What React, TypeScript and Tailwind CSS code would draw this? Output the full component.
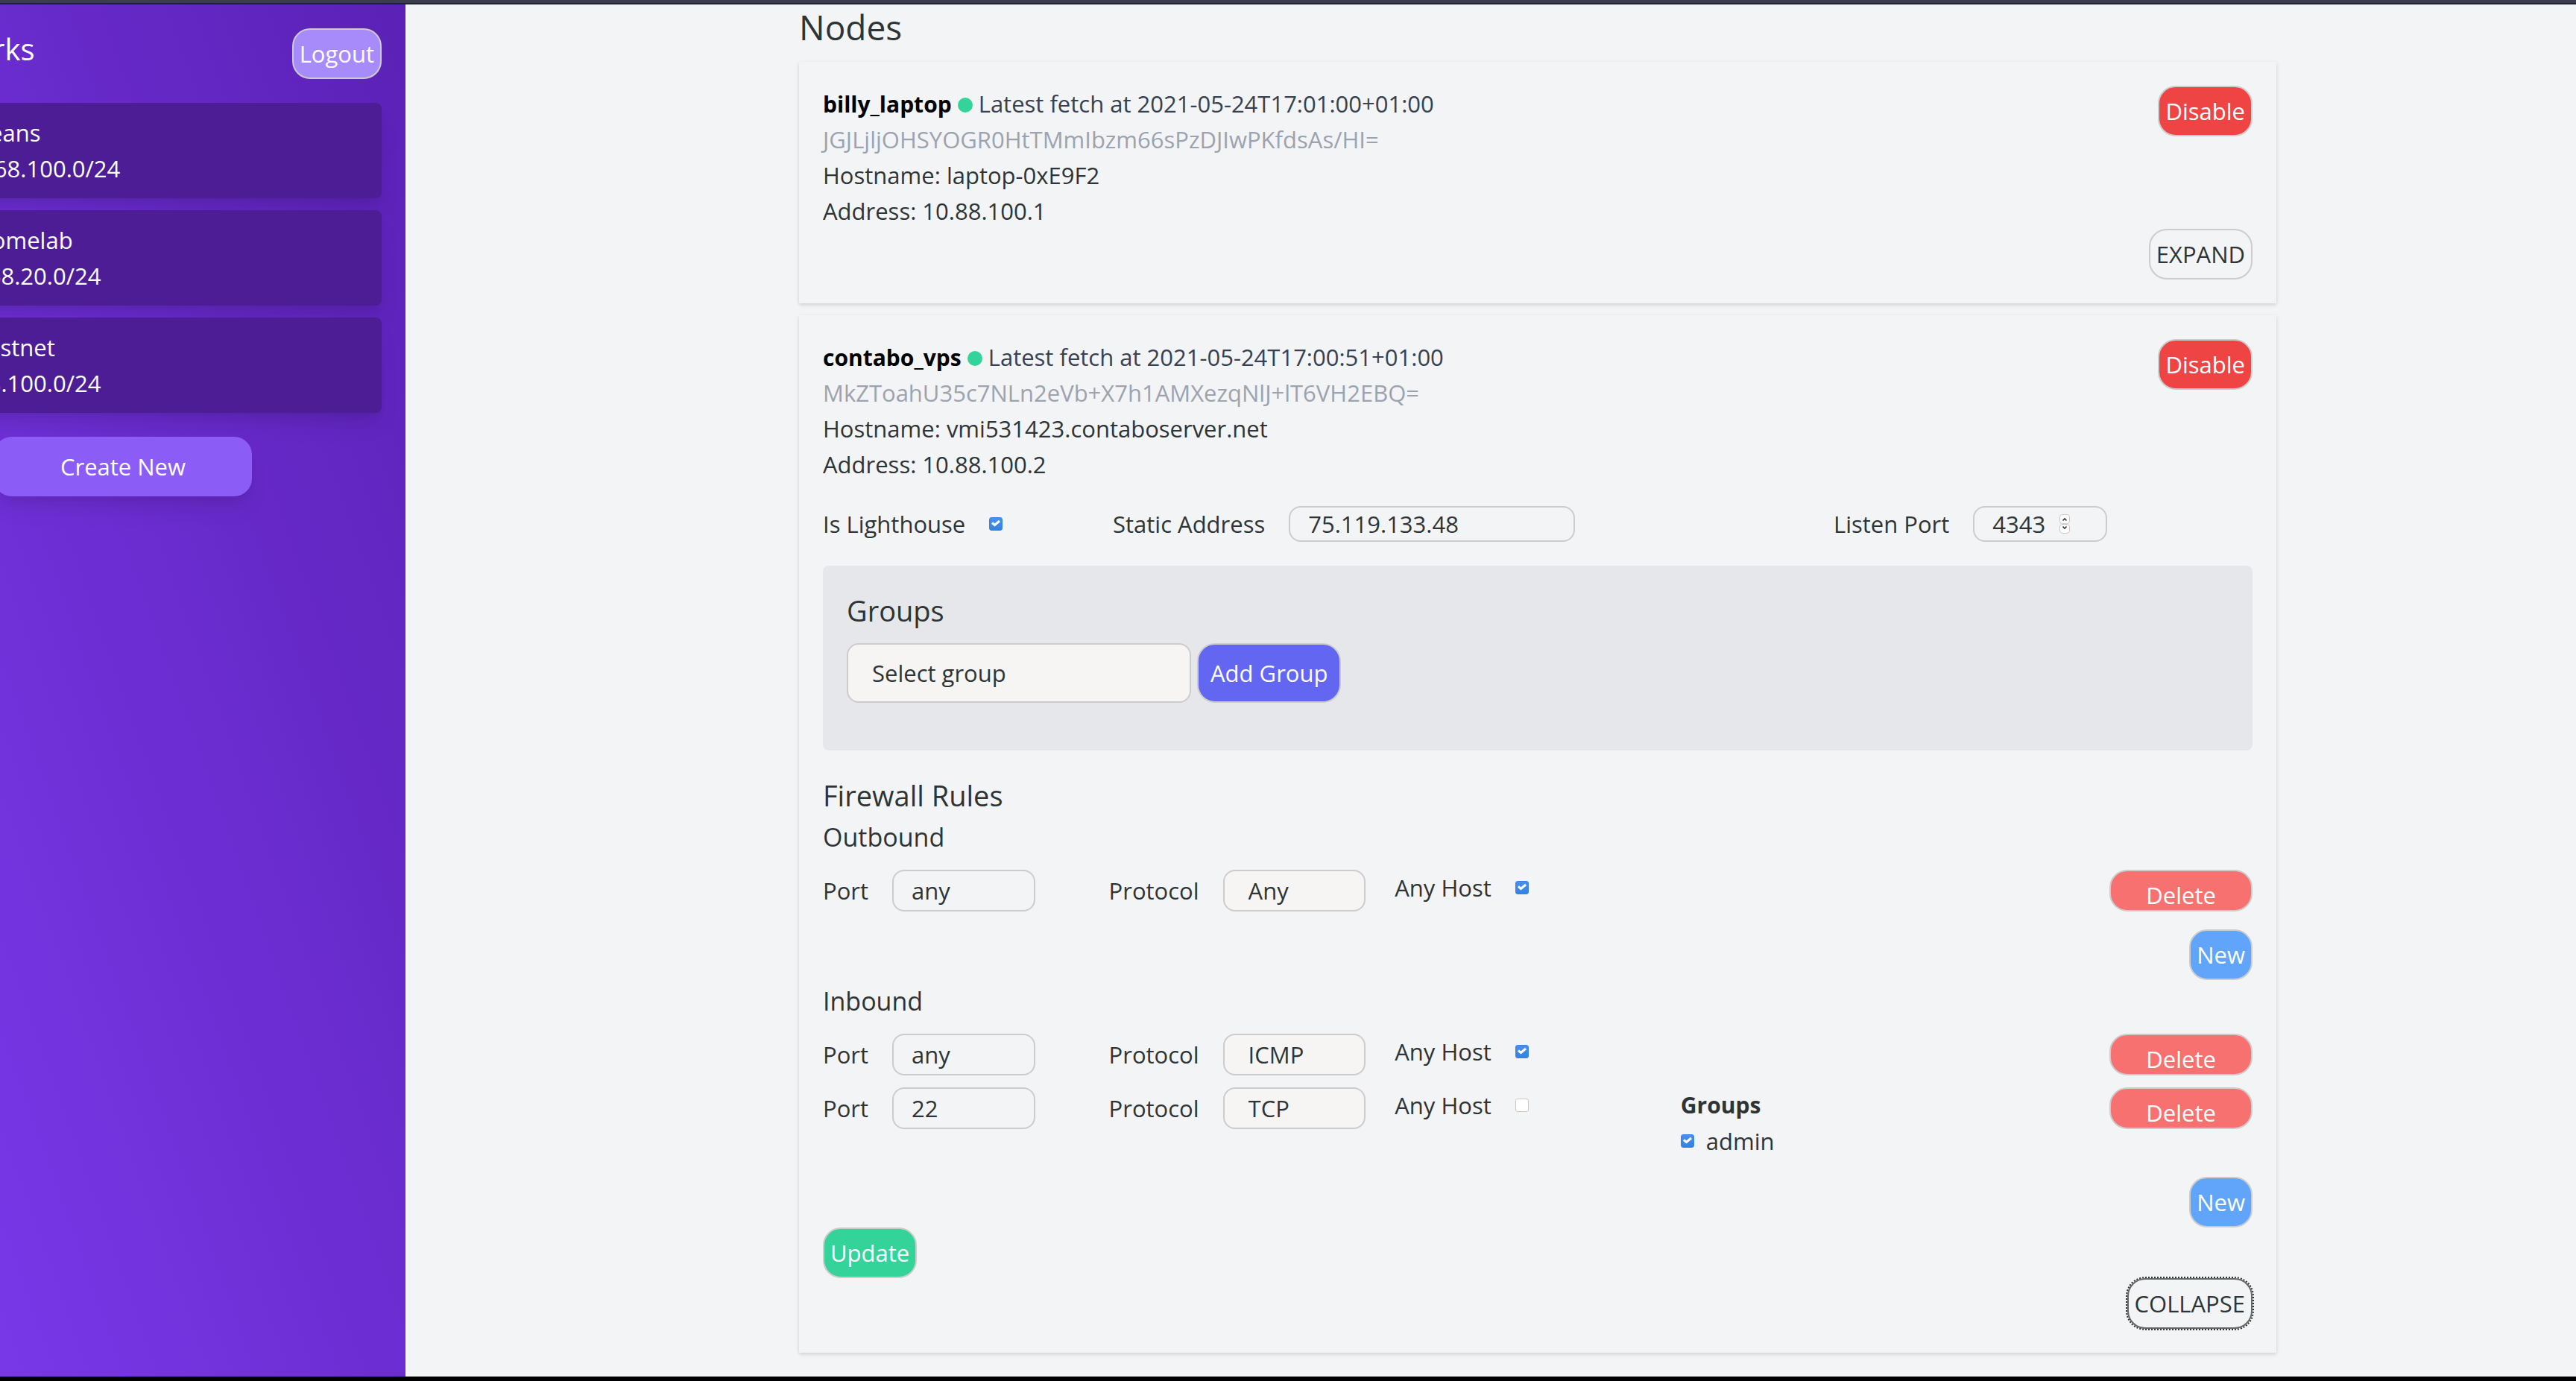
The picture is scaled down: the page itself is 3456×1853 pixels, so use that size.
import { useState } from "react";
import type { ReactNode } from "react";

const LINE = "text-[31px] leading-[48px]";

const networks = [
  { name: "Beans", cidr: "2.68.100.0/24" },
  { name: "Homelab", cidr: "168.20.0/24" },
  { name: "Testnet", cidr: "88.100.0/24" },
];

type Rule = { id: string; port: string; protocol: string; anyHost: boolean; groups?: string[] };

const outbound: Rule[] = [{ id: "out-1", port: "any", protocol: "Any", anyHost: true }];
const inbound: Rule[] = [
  { id: "in-1", port: "any", protocol: "ICMP", anyHost: true },
  { id: "in-2", port: "22", protocol: "TCP", anyHost: false, groups: ["admin"] },
];

function PillButton({ className, children }: { className: string; children: string }) {
  return (
    <button type="button" className={`rounded-3xl border-2 border-[#cccccc] p-2 text-[31px] leading-[48px] ${className}`}>
      {children}
    </button>
  );
}

function Checkbox({ id, initial }: { id: string; initial: boolean }) {
  const [on, setOn] = useState(initial);
  return (
    <span className="relative block size-[18px] shrink-0">
      <input
        id={id}
        type="checkbox"
        checked={on}
        onChange={() => setOn(!on)}
        className="block size-[18px] appearance-none rounded-[3px] border border-[#cdc7c2] bg-white checked:border-[#3584e4] checked:bg-linear-to-b checked:from-[#4a90ea] checked:to-[#3382e2]"
      />
      {on && (
        <svg viewBox="0 0 18 18" className="pointer-events-none absolute inset-0 size-[18px]" fill="none" stroke="white" strokeWidth="3" aria-hidden="true">
          <path d="M4 7.5 L7.5 10.5 L14 5" />
        </svg>
      )}
    </span>
  );
}

function Sidebar() {
  return (
    <aside className="w-[544px] shrink-0 overflow-hidden">
      <div className="-ml-[112px] h-full bg-linear-to-tr/srgb from-[#7c3aed] to-[#5b21b6] pt-8 pr-8 pl-[62px] text-white">
        <div className="flex items-start justify-between pl-4">
          <h2 className="text-[40px] leading-[56px]">orks</h2>
          <PillButton className="bg-[#a78bfa]">Logout</PillButton>
        </div>
        <ul className="mt-8 flex flex-col gap-4">
          {networks.map((n) => (
            <li key={n.name} className={`rounded-lg bg-[#4c1d95] p-4 shadow-[0_20px_30px_-6px_rgba(0,0,0,0.1),0_8px_12px_-4px_rgba(0,0,0,0.05)] ${LINE}`}>
              <p>{n.name}</p>
              <p>{n.cidr}</p>
            </li>
          ))}
        </ul>
        <button type="button" className={`mt-8 ml-[42px] w-[346px] rounded-3xl bg-[#8b5cf6] p-4 shadow-[0_20px_30px_-6px_rgba(0,0,0,0.1),0_8px_12px_-4px_rgba(0,0,0,0.05)] ${LINE}`}>
          Create New
        </button>
      </div>
    </aside>
  );
}

function NodeSummary({ name, fetched, publicKey, hostname, address }: Record<"name" | "fetched" | "publicKey" | "hostname" | "address", string>) {
  return (
    <div className="flex items-start justify-between">
      <div className={LINE}>
        <div className="flex h-12 items-baseline gap-2">
          <h2 className="text-[30px] font-bold text-black">{name}</h2>
          <span className="size-5 rounded-full bg-[#34d399]" />
          <span className="text-[#374151]">Latest fetch at {fetched}</span>
        </div>
        <p className="text-[#9ca3af]">{publicKey}</p>
        <p>Hostname: {hostname}</p>
        <p>Address: {address}</p>
      </div>
      <PillButton className="bg-[#ef4444] text-white">Disable</PillButton>
    </div>
  );
}

function RuleRow({ rule }: { rule: Rule }) {
  return (
    <div className={`mt-4 grid grid-cols-5 items-start ${LINE}`}>
      <div className="flex items-center gap-8">
        <label htmlFor={`${rule.id}-port`}>Port</label>
        <input id={`${rule.id}-port`} defaultValue={rule.port} className="h-14 w-1/2 rounded-2xl border-2 border-[#cccccc] px-6" />
      </div>
      <div className="flex items-center gap-8">
        <label htmlFor={`${rule.id}-protocol`}>Protocol</label>
        <select id={`${rule.id}-protocol`} defaultValue={rule.protocol} className="h-14 w-1/2 appearance-none rounded-2xl border-2 border-[#cccccc] bg-[#f6f5f4] px-8">
          <option>Any</option>
          <option>ICMP</option>
          <option>TCP</option>
          <option>UDP</option>
        </select>
      </div>
      <div className="flex items-center gap-8">
        <label htmlFor={`${rule.id}-any`}>Any Host</label>
        <Checkbox id={`${rule.id}-any`} initial={rule.anyHost} />
      </div>
      <div>
        {rule.groups && (
          <>
            <h4 className="text-[30px] font-bold">Groups</h4>
            {rule.groups.map((g) => (
              <div key={g} className="flex items-center gap-4">
                <Checkbox id={`${rule.id}-${g}`} initial />
                <label htmlFor={`${rule.id}-${g}`}>{g}</label>
              </div>
            ))}
          </>
        )}
      </div>
      <button type="button" className="flex h-14 w-1/2 justify-center justify-self-end rounded-3xl border-2 border-[#cccccc] bg-[#f87171] pt-2 text-white">
        Delete
      </button>
    </div>
  );
}

function RuleSection({ title, rules }: { title: string; rules: Rule[] }) {
  return (
    <section className="flex flex-col">
      <h3 className="text-[34px] leading-[56px]">{title}</h3>
      {rules.map((r) => (
        <RuleRow key={r.id} rule={r} />
      ))}
      <PillButton className="mt-6 self-end bg-[#60a5fa] text-white">New</PillButton>
    </section>
  );
}

function Card({ children }: { children: ReactNode }) {
  return (
    <article className="flex flex-col p-8 shadow-[0_2px_6px_rgba(0,0,0,0.1),0_2px_4px_rgba(0,0,0,0.06)]">{children}</article>
  );
}

export default function App() {
  return (
    <div className="flex min-h-screen flex-col bg-[#f3f4f6] font-['Open_Sans',sans-serif] text-[#2e3436]">
      <div className="h-[6px] border-b-2 border-[#22222e] bg-[#3b3c4c]" />
      <div className="flex grow">
        <Sidebar />
        <main className="grow pr-[402px] pb-8 pl-[528px]">
          <h1 className="text-[46px] leading-[61px]">Nodes</h1>
          <div className="mt-4 flex flex-col gap-4">
            <Card>
              <NodeSummary
                name="billy_laptop"
                fetched="2021-05-24T17:01:00+01:00"
                publicKey="JGJLjljOHSYOGR0HtTMmIbzm66sPzDJIwPKfdsAs/HI="
                hostname="laptop-0xE9F2"
                address="10.88.100.1"
              />
              <PillButton className="self-end">EXPAND</PillButton>
            </Card>
            <Card>
              <NodeSummary
                name="contabo_vps"
                fetched="2021-05-24T17:00:51+01:00"
                publicKey="MkZToahU35c7NLn2eVb+X7h1AMXezqNlJ+lT6VH2EBQ="
                hostname="vmi531423.contaboserver.net"
                address="10.88.100.2"
              />
              <div className={`mt-8 grid grid-cols-[389fr_967fr_562fr] ${LINE}`}>
                <div className="flex items-center gap-8">
                  <label htmlFor="lighthouse">Is Lighthouse</label>
                  <Checkbox id="lighthouse" initial />
                </div>
                <div className="flex items-center gap-8">
                  <label htmlFor="static-address">Static Address</label>
                  <input id="static-address" defaultValue="75.119.133.48" className="h-12 w-[384px] rounded-2xl border-2 border-[#cccccc] px-6" />
                </div>
                <div className="flex items-center gap-8">
                  <label htmlFor="listen-port">Listen Port</label>
                  <div className="relative">
                    <input
                      id="listen-port"
                      type="number"
                      defaultValue={4343}
                      className="block h-12 w-[180px] rounded-2xl border-2 border-[#cccccc] px-6 [appearance:textfield] [&::-webkit-inner-spin-button]:appearance-none"
                    />
                    <svg viewBox="0 0 14 26" className="pointer-events-none absolute top-[11px] left-[116px] h-[26px] w-[14px]" fill="white" stroke="#cdc7c2" aria-hidden="true">
                      <rect x="0.5" y="0.5" width="13" height="12" rx="3.5" />
                      <rect x="0.5" y="13.5" width="13" height="12" rx="3.5" />
                      <path d="M4.5 8.5 L7 6 L9.5 8.5 M4.5 16.5 L7 19 L9.5 16.5" fill="none" stroke="#2e3436" strokeWidth="1.6" />
                    </svg>
                  </div>
                </div>
              </div>
              <section className="mt-8 rounded-lg bg-[#e5e7eb] px-8 pt-8 pb-16">
                <h3 className="text-[38px] leading-[56px]">Groups</h3>
                <div className={`mt-4 flex gap-2 ${LINE}`}>
                  <select aria-label="Select group" className="h-20 w-[462px] appearance-none rounded-2xl border-2 border-[#cccccc] bg-[#f6f5f4] px-8">
                    <option>Select group</option>
                    <option>admin</option>
                  </select>
                  <button type="button" className="h-20 rounded-3xl border-2 border-[#cccccc] bg-[#6366f1] px-4 text-white">
                    Add Group
                  </button>
                </div>
              </section>
              <h3 className="mt-8 text-[38px] leading-[56px]">Firewall Rules</h3>
              <RuleSection title="Outbound" rules={outbound} />
              <RuleSection title="Inbound" rules={inbound} />
              <PillButton className="self-start bg-[#34d399] text-white">Update</PillButton>
              <button type="button" className="self-end rounded-3xl border-2 border-[#66696b] p-2 text-[31px] leading-[48px] outline-2 outline-dotted outline-[#2e3436]">
                COLLAPSE
              </button>
            </Card>
          </div>
        </main>
      </div>
      <div className="h-[6px] bg-black" />
    </div>
  );
}
